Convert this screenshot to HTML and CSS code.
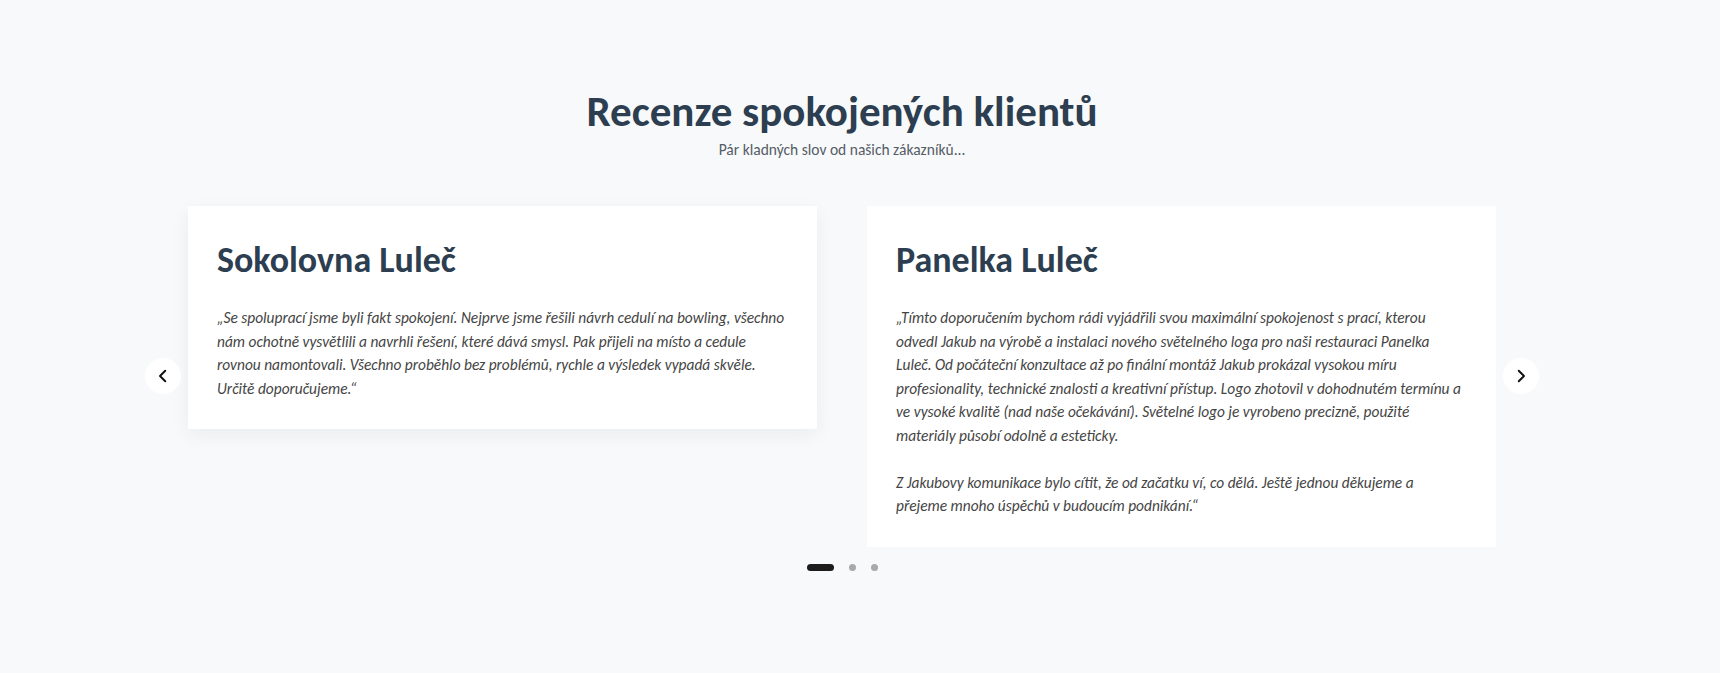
FILE: index.html
```html
<!DOCTYPE html>
<html lang="cs">
<head>
<meta charset="utf-8">
<title>Recenze</title>
<link rel="stylesheet" href="styles.css">
</head>
<body>
<section class="reviews">
  <header class="reviews-head">
    <h2 class="reviews-title">Recenze spokojených klientů</h2>
    <p class="reviews-sub">Pár kladných slov od našich zákazníků...</p>
  </header>

  <div class="carousel">
    <button class="nav nav-prev" aria-label="Předchozí">
      <svg viewBox="0 0 24 24" width="18" height="18"><path d="M15 5l-7 7 7 7" fill="none" stroke="#111" stroke-width="2.6" stroke-linecap="round" stroke-linejoin="round"/></svg>
    </button>

    <div class="track">
      <div class="slide">
        <article class="card card-raised">
          <h3 class="card-title">Sokolovna Luleč</h3>
          <p class="card-text">„Se spoluprací jsme byli fakt spokojení. Nejprve jsme řešili návrh cedulí na bowling, všechno nám ochotně vysvětlili a navrhli řešení, které dává smysl. Pak přijeli na místo a cedule rovnou namontovali. Všechno proběhlo bez problémů, rychle a výsledek vypadá skvěle. Určitě doporučujeme.“</p>
        </article>
      </div>
      <div class="slide">
        <article class="card">
          <h3 class="card-title">Panelka Luleč</h3>
          <p class="card-text">„Tímto doporučením bychom rádi vyjádřili svou maximální spokojenost s prací, kterou odvedl Jakub na výrobě a instalaci nového světelného loga pro naši restauraci Panelka Luleč. Od počáteční konzultace až po finální montáž Jakub prokázal vysokou míru profesionality, technické znalosti a kreativní přístup. Logo zhotovil v dohodnutém termínu a ve vysoké kvalitě (nad naše očekávání). Světelné logo je vyrobeno precizně, použité materiály působí odolně a esteticky.<br><br>Z Jakubovy komunikace bylo cítit, že od začatku ví, co dělá. Ještě jednou děkujeme a přejeme mnoho úspěchů v budoucím podnikání.“</p>
        </article>
      </div>
    </div>

    <button class="nav nav-next" aria-label="Další">
      <svg viewBox="0 0 24 24" width="18" height="18"><path d="M9 5l7 7-7 7" fill="none" stroke="#111" stroke-width="2.6" stroke-linecap="round" stroke-linejoin="round"/></svg>
    </button>
  </div>

  <div class="dots">
    <span class="dot dot-active"></span>
    <span class="dot"></span>
    <span class="dot"></span>
  </div>
</section>
</body>
</html>
```

FILE: styles.css
```css
* {
  box-sizing: border-box;
}

html, body {
  margin: 0;
  padding: 0;
}

body {
  background: #f8f9fa;
  font-family: Carlito, Calibri, Lato, "Liberation Sans", sans-serif;
  color: #2c3e50;
  height: 673px;
  overflow: hidden;
}

.reviews {
  padding: 88px 36px 0 0;
}

.reviews-head {
  text-align: center;
}

.reviews-title {
  margin: 0;
  font-size: 43px;
  font-weight: 900;
  line-height: 48px;
  color: #2c3e50;
}

.reviews-sub {
  margin: 4px 0 0;
  font-size: 15.5px;
  line-height: 20px;
  color: #555d66;
}

.carousel {
  position: relative;
  width: 1358px;
  margin: 46px auto 0;
}

.track {
  display: flex;
  align-items: flex-start;
}

.slide {
  flex: 0 0 50%;
  padding: 0 25px;
}

.card {
  background: #fff;
  padding: 28px 30px 29px 29px;
}

.card-raised {
  box-shadow: 0 6px 18px rgba(30, 40, 60, 0.06);
}

.card-title {
  margin: 0 0 20px;
  font-size: 36px;
  font-weight: 700;
  line-height: 52px;
  color: #2c3e50;
}

.card-text {
  margin: 0;
  font-size: 15.4px;
  font-style: italic;
  line-height: 23.5px;
  color: #444;
}

.nav {
  position: absolute;
  top: 152px;
  width: 36px;
  height: 36px;
  border: 0;
  border-radius: 50%;
  background: #fff;
  display: flex;
  align-items: center;
  justify-content: center;
  padding: 0;
  cursor: pointer;
}

.nav-prev {
  left: -18px;
}

.nav-next {
  right: -18px;
}

.dots {
  display: flex;
  justify-content: center;
  align-items: center;
  gap: 15px;
  margin-top: 17px;
}

.dot {
  width: 7px;
  height: 7px;
  border-radius: 50%;
  background: #a9a9a9;
}

.dot-active {
  width: 27px;
  border-radius: 4px;
  background: #1c1c1c;
}
```
